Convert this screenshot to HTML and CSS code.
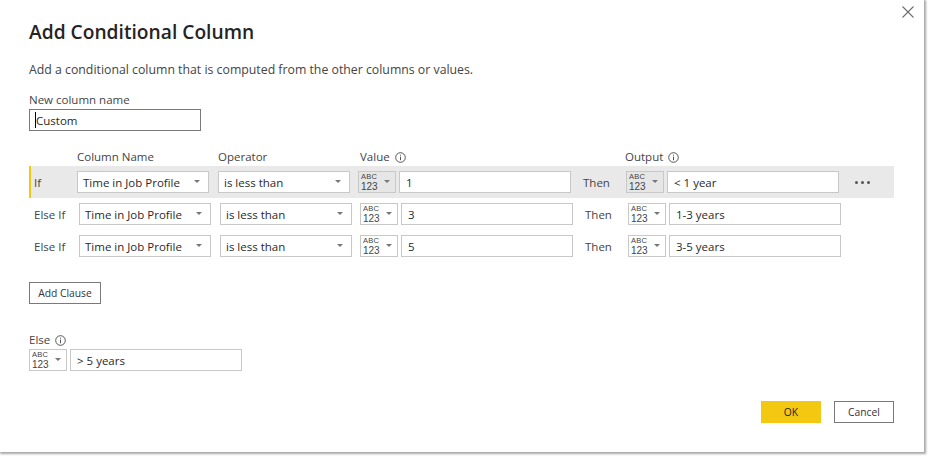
FILE: index.html
```html
<!DOCTYPE html>
<html lang="en">
<head>
  <meta charset="UTF-8" />
  <title>Add Conditional Column</title>
  <link rel="stylesheet" href="styles.css">
</head>
<body>
  <div class="dialog">
    <div class="close">
      <svg width="12" height="12" viewBox="0 0 12 12"><path d="M0.5 0.5L11.5 11.5M11.5 0.5L0.5 11.5" stroke="#6e6e6e" stroke-width="1.1" fill="none"/></svg>
    </div>

    <h1>Add Conditional Column</h1>
    <p class="desc">Add a conditional column that is computed from the other columns or values.</p>

    <label class="name-label">New column name</label>
    <div class="field name-field"><span class="caret"></span>Custom</div>

    <div class="heads">
      <span class="head head-col">Column Name</span>
      <span class="head head-op">Operator</span>
      <span class="head head-val">Value
        <svg class="info" width="11" height="11" viewBox="0 0 11 11"><circle cx="5.5" cy="5.5" r="4.8" stroke="#555" fill="none"/><path d="M5.5 4.6V8.2M5.5 2.7V3.7" stroke="#555" fill="none"/></svg>
      </span>
      <span class="head">Output
        <svg class="info" width="11" height="11" viewBox="0 0 11 11"><circle cx="5.5" cy="5.5" r="4.8" stroke="#555" fill="none"/><path d="M5.5 4.6V8.2M5.5 2.7V3.7" stroke="#555" fill="none"/></svg>
      </span>
    </div>

    <div class="clause active">
      <span class="clause-label">If</span>
      <div class="field select col-select">Time in Job Profile<i class="arrow"></i></div>
      <div class="field select op-select">is less than<i class="arrow"></i></div>
      <div class="type"><span class="abc">ABC</span><span class="num">123</span><i class="arrow"></i></div>
      <div class="field value">1</div>
      <span class="then">Then</span>
      <div class="type"><span class="abc">ABC</span><span class="num">123</span><i class="arrow"></i></div>
      <div class="field value">&lt; 1 year</div>
      <div class="dots"><i></i><i></i><i></i></div>
    </div>

    <div class="clause">
      <span class="clause-label">Else If</span>
      <div class="field select col-select">Time in Job Profile<i class="arrow"></i></div>
      <div class="field select op-select">is less than<i class="arrow"></i></div>
      <div class="type"><span class="abc">ABC</span><span class="num">123</span><i class="arrow"></i></div>
      <div class="field value">3</div>
      <span class="then">Then</span>
      <div class="type"><span class="abc">ABC</span><span class="num">123</span><i class="arrow"></i></div>
      <div class="field value">1-3 years</div>
    </div>

    <div class="clause">
      <span class="clause-label">Else If</span>
      <div class="field select col-select">Time in Job Profile<i class="arrow"></i></div>
      <div class="field select op-select">is less than<i class="arrow"></i></div>
      <div class="type"><span class="abc">ABC</span><span class="num">123</span><i class="arrow"></i></div>
      <div class="field value">5</div>
      <span class="then">Then</span>
      <div class="type"><span class="abc">ABC</span><span class="num">123</span><i class="arrow"></i></div>
      <div class="field value">3-5 years</div>
    </div>

    <button class="btn add-clause">Add Clause</button>

    <div class="else-label">Else
      <svg class="info" width="11" height="11" viewBox="0 0 11 11"><circle cx="5.5" cy="5.5" r="4.8" stroke="#555" fill="none"/><path d="M5.5 4.6V8.2M5.5 2.7V3.7" stroke="#555" fill="none"/></svg>
    </div>
    <div class="else-row">
      <div class="type"><span class="abc">ABC</span><span class="num">123</span><i class="arrow"></i></div>
      <div class="field value">&gt; 5 years</div>
    </div>

    <div class="actions">
      <button class="btn ok">OK</button>
      <button class="btn cancel">Cancel</button>
    </div>
  </div>
</body>
</html>
```

FILE: styles.css
```css
html, body {
  margin: 0;
  padding: 0;
  background: #fff;
}
body {
  font-family: 'Open Sans', 'Noto Sans', sans-serif;
  font-size: 11.5px;
  color: #444;
  width: 928px;
  height: 457px;
  overflow: hidden;
}
.dialog {
  position: relative;
  box-sizing: border-box;
  width: 924px;
  height: 452px;
  padding: 0 30px 0 29px;
  background: #fff;
  box-shadow: 1px 1px 2px 1px #a8a8a8;
  overflow: hidden;
}
.close {
  position: absolute;
  top: 6px;
  left: 902px;
  width: 12px;
  height: 12px;
}
h1 {
  margin: 0;
  padding-top: 19px;
  font-size: 19.2px;
  line-height: 26px;
  font-weight: 600;
  color: #252423;
}
.desc {
  margin: 17px 0 0;
  font-size: 12.3px;
  line-height: 16px;
}
.name-label {
  display: block;
  margin-top: 14px;
  line-height: 15px;
}
.field {
  box-sizing: border-box;
  height: 22px;
  line-height: 20px;
  padding: 1px 6px 0;
  border: 1px solid #c8c8c8;
  background: #fff;
  color: #2a2a2a;
}
.name-field {
  position: relative;
  width: 172px;
  margin-top: 2px;
  border-color: #7a7a7a;
}
.caret {
  position: absolute;
  left: 5px;
  top: 2px;
  height: 16px;
  border-left: 1px solid #000;
}
.heads {
  display: flex;
  margin-top: 18px;
  padding-left: 48px;
  line-height: 16px;
}
.head {
  display: flex;
  align-items: center;
  gap: 5px;
}
.head-col { width: 141px; }
.head-op { width: 142px; }
.head-val { width: 265px; }
.clause {
  display: flex;
  align-items: center;
  height: 32px;
}
.clause.active {
  box-sizing: border-box;
  border-left: 2px solid #f2c811;
  background: #e9e9e9;
}
.clause-label {
  box-sizing: border-box;
  width: 50px;
  padding-left: 5px;
}
.active .clause-label {
  width: 46px;
  padding-left: 3px;
}
.heads + .clause {
  margin-top: 1px;
}
.select {
  position: relative;
  width: 132px;
  padding-left: 5px;
}
.col-select { margin-right: 9px; }
.op-select { margin-right: 8px; }
.arrow {
  position: absolute;
  top: 8px;
  right: 8px;
  border-left: 3px solid transparent;
  border-right: 3px solid transparent;
  border-top: 3px solid #777;
}
.type {
  position: relative;
  box-sizing: border-box;
  width: 38px;
  height: 22px;
  margin-right: 3px;
  padding: 0 0 0 2px;
  border: 1px solid #c8c8c8;
  background: #fff;
  color: #444;
}
.type .arrow {
  right: 5px;
}
.active .type {
  background: #e6e6e6;
}
.abc, .num {
  display: block;
  font-family: 'Liberation Sans', sans-serif;
}
.abc {
  font-size: 7.5px;
  line-height: 9px;
  letter-spacing: 0.3px;
}
.num {
  font-size: 10px;
  line-height: 11px;
}
.value {
  width: 172px;
}
.then {
  box-sizing: border-box;
  width: 55px;
  padding-left: 12px;
}
.dots {
  display: flex;
  gap: 3px;
  margin-left: 16px;
}
.dots i {
  width: 3px;
  height: 3px;
  border-radius: 50%;
  background: #555;
}
.btn {
  box-sizing: border-box;
  height: 22px;
  padding: 0;
  font-family: inherit;
  font-size: 10.3px;
  color: #333;
  background: #fff;
  border: 1px solid #7a7a7a;
}
.add-clause {
  display: block;
  width: 72px;
  margin-top: 20px;
}
.else-label {
  display: flex;
  align-items: center;
  gap: 5px;
  margin-top: 28px;
  line-height: 16px;
}
.else-row {
  display: flex;
  margin-top: 1px;
}
.actions {
  display: flex;
  justify-content: flex-end;
  gap: 13px;
  margin-top: 30px;
}
.ok {
  width: 60px;
  border: none;
  background: #f2c811;
  color: #252423;
}
.cancel {
  width: 60px;
}
```
